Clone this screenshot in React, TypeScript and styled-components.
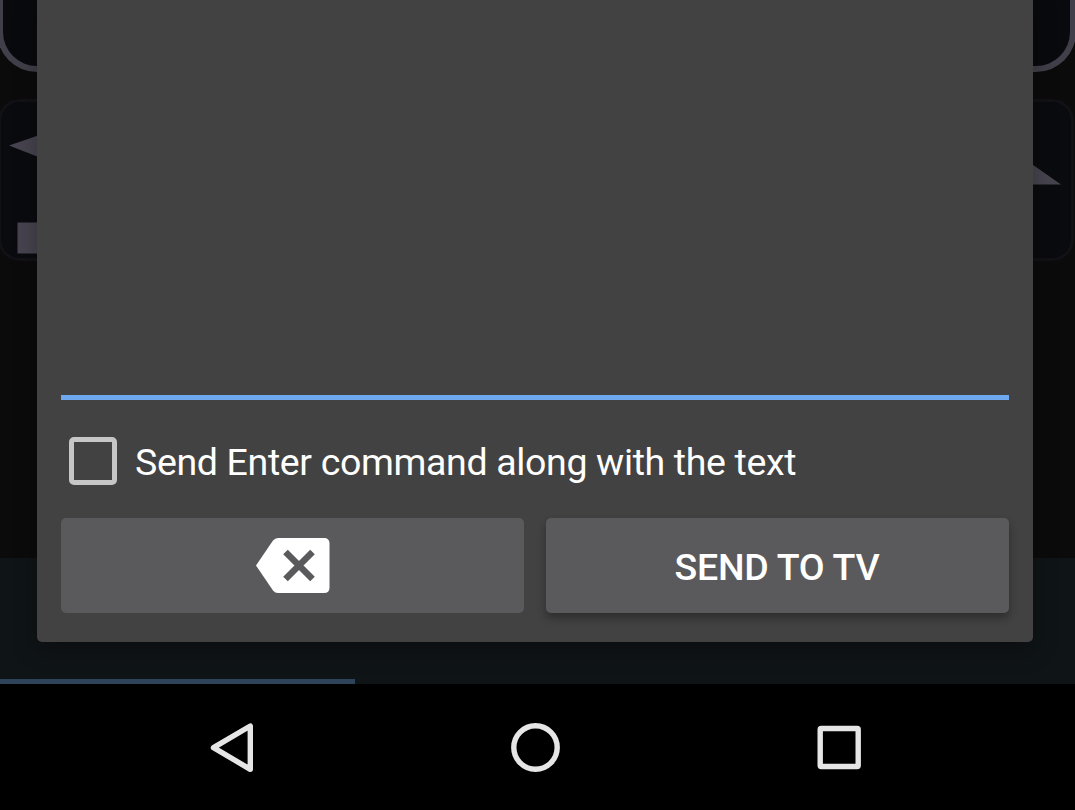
import React from "react";
import styled, { createGlobalStyle } from "styled-components";

const GlobalStyle = createGlobalStyle`
  * { box-sizing: border-box; }
  body { margin: 0; background: #000; font-family: Roboto, "Liberation Sans", sans-serif; }
`;

const Screen = styled.div`
  position: relative;
  display: flex;
  flex-direction: column;
  width: 1075px;
  height: 810px;
  overflow: hidden;
  background: #000;
`;

const Remote = styled.div`
  display: flex;
  flex-direction: column;
  gap: 27px;
  height: 558px;
  background: #0b0b0b;
`;

const PowerKey = styled.div`
  height: 72px;
  margin: 0 -1px 0 -3px;
  border: 6px solid #413f49;
  border-top: 0;
  border-radius: 0 0 40px 40px;
  background: #090a0e;
`;

const MediaKey = styled.div`
  display: flex;
  justify-content: space-between;
  height: 162px;
  margin: 0 1px 0 -2px;
  border: 3px solid #111116;
  border-radius: 22px;
  background: #0a0b0e;
`;

const KeyGlyph = styled.svg`
  width: 40px;
  height: 156px;
  fill: #47444f;
`;

const Tabs = styled.div`
  display: flex;
  align-items: flex-end;
  height: 126px;
  background: #0f1417;
`;

const TabIndicator = styled.div`
  width: 355px;
  height: 5px;
  background: #2d435a;
`;

const NavBar = styled.nav`
  display: flex;
  flex: 1;
  justify-content: center;
  gap: 240px;
  padding: 31px 0 0;
`;

const NavButton = styled.button`
  width: 64px;
  height: 64px;
  padding: 0;
  border: 0;
  background: none;
`;

const NavIcon = styled.svg`
  display: block;
  width: 64px;
  height: 64px;
  fill: none;
  stroke: #e6e6e6;
  stroke-width: 5.4;
  stroke-linejoin: round;
`;

const Dialog = styled.section`
  position: absolute;
  top: 0;
  left: 37px;
  display: flex;
  flex-direction: column;
  width: 996px;
  height: 642px;
  padding: 0 24px 29px;
  border-radius: 0 0 5px 5px;
  background: #424242;
  box-shadow: 0 8px 24px rgba(0, 0, 0, 0.3);
`;

const TextField = styled.div`
  height: 400px;
  border-bottom: 5px solid #6ea8ee;
`;

const CheckRow = styled.label`
  display: flex;
  flex: 1;
  align-items: center;
  gap: 18px;
  padding: 3px 0 0 8px;
`;

const CheckBox = styled.span`
  width: 48px;
  height: 48px;
  border: 5px solid #c6c6c6;
  border-radius: 5px;
`;

const CheckLabel = styled.span`
  padding-top: 2px;
  color: #fff;
  font-size: 37.5px;
  line-height: 44px;
  letter-spacing: -0.35px;
  white-space: nowrap;
`;

const Actions = styled.div`
  display: grid;
  grid-template-columns: 463px 463px;
  justify-content: space-between;
  height: 95px;
`;

const ActionButton = styled.button<{ $raised?: boolean }>`
  display: flex;
  align-items: center;
  justify-content: center;
  padding: 0;
  border: 0;
  border-radius: 5px;
  background: #5a5a5c;
  color: #fff;
  font: 500 37.5px/44px Roboto, "Liberation Sans", sans-serif;
  letter-spacing: -0.25px;
  box-shadow: ${(p) => (p.$raised ? "0 5px 8px rgba(0, 0, 0, 0.32)" : "none")};
`;

const ActionLabel = styled.span`
  padding: 2px 1px 0 0;
`;

const BackspaceIcon = styled.svg`
  width: 74px;
  height: 56px;
`;

export default function App() {
  return (
    <Screen>
      <GlobalStyle />
      <Remote>
        <PowerKey />
        <MediaKey>
          <KeyGlyph viewBox="0 0 40 156">
            <path d="M8 43.500 40 32.500v23.500zM16.500 120.500h24v31H16.500z" />
          </KeyGlyph>
          <KeyGlyph viewBox="0 0 40 156">
            <path d="M0 61.500 30 82.500H0z" />
          </KeyGlyph>
        </MediaKey>
      </Remote>
      <Tabs>
        <TabIndicator />
      </Tabs>
      <NavBar>
        <NavButton aria-label="Back">
          <NavIcon viewBox="0 0 64 64">
            <path d="M11.500 32.700 48.300 11v43.300z" />
          </NavIcon>
        </NavButton>
        <NavButton aria-label="Home">
          <NavIcon viewBox="0 0 64 64">
            <circle cx="29.500" cy="32.500" r="21.700" />
          </NavIcon>
        </NavButton>
        <NavButton aria-label="Recent apps">
          <NavIcon viewBox="0 0 64 64">
            <rect x="10.200" y="13.500" width="38" height="38" rx="1" />
          </NavIcon>
        </NavButton>
      </NavBar>
      <Dialog>
        <TextField />
        <CheckRow>
          <CheckBox />
          <CheckLabel>Send Enter command along with the text</CheckLabel>
        </CheckRow>
        <Actions>
          <ActionButton aria-label="Delete">
            <BackspaceIcon viewBox="0 0 74 56">
              <path
                d="M22 0H68Q73.500 0 73.500 5.500V49.500Q73.500 55 68 55H22Q19 55 17 52.500L0 27.500 17 2.500Q19 0 22 0z"
                fill="#fff"
              />
              <path d="M29.500 14 56.500 41M56.500 14 29.500 41" stroke="#5a5a5c" strokeWidth="6.500" />
            </BackspaceIcon>
          </ActionButton>
          <ActionButton $raised>
            <ActionLabel>SEND TO TV</ActionLabel>
          </ActionButton>
        </Actions>
      </Dialog>
    </Screen>
  );
}
